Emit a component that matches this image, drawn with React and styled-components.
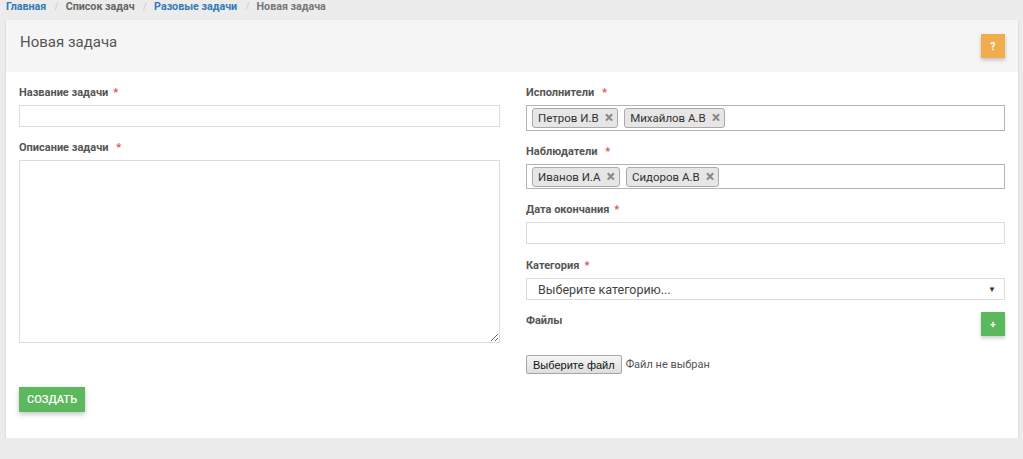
import React from "react";
import styled, { createGlobalStyle } from "styled-components";

const GlobalStyle = createGlobalStyle`
  body {
    margin: 0;
    background: #ececec;
    font-family: Roboto, "Liberation Sans", Arial, sans-serif;
    color: #555;
  }
`;

const Page = styled.div`
  padding: 0 5px 0 6px;
`;

const Breadcrumb = styled.ol`
  list-style: none;
  margin: 0;
  padding: 0;
  height: 20px;
  display: flex;
  align-items: center;
  font-size: 10.7px;
  font-weight: 700;
  line-height: 14px;
  position: relative;
  top: -3px;

  & > li + li::before {
    content: "/";
    color: #ccc;
    font-weight: 400;
    padding: 0 7px 0 8px;
  }
`;

const Crumb = styled.li`
  color: ${(p) => (p.$link ? "#337ab7" : p.$active ? "#777" : "#666")};
`;

const Card = styled.div`
  background: #fff;
  box-shadow: 0 1px 2px rgba(0, 0, 0, 0.18);
`;

const CardHeader = styled.div`
  background: #f5f5f5;
  height: 52px;
  display: flex;
  align-items: flex-start;
  justify-content: space-between;
  padding: 0 13px 0 14px;
`;

const Title = styled.h3`
  margin: 12px 0 0;
  font-size: 15px;
  font-weight: 400;
  color: #555;
  line-height: 20px;
`;

const SquareButton = styled.button`
  width: 24px;
  height: 24px;
  border: none;
  padding: 0;
  background: ${(p) => p.$color};
  color: #fff;
  font-size: 10px;
  font-weight: 700;
  font-family: inherit;
  box-shadow: 0 2px 4px rgba(0, 0, 0, 0.22);
  cursor: pointer;
  margin-top: ${(p) => p.$top || 0}px;
`;

const CardBody = styled.div`
  padding: 14px 13px 26px;
`;

const Row = styled.div`
  display: grid;
  grid-template-columns: 481px 1fr;
  gap: 26px;
`;

const Column = styled.div`
  display: flex;
  flex-direction: column;
`;

const Label = styled.label`
  display: block;
  font-size: 11px;
  font-weight: 700;
  line-height: 14px;
  color: #555;
  margin: ${(p) => p.$mt ?? 14}px 0 5px;
`;

const Req = styled.span`
  color: #d9534f;
  margin-left: 5px;
`;

const TextInput = styled.input`
  box-sizing: border-box;
  width: 100%;
  height: 22px;
  border: 1px solid #dcdcdc;
  padding: 0 12px;
  font-family: inherit;
  font-size: 12px;
  outline: none;
`;

const TextArea = styled.textarea`
  box-sizing: border-box;
  width: 100%;
  height: 183px;
  border: 1px solid #dcdcdc;
  padding: 6px 12px;
  font-family: inherit;
  font-size: 12px;
  outline: none;
  display: block;
`;

const TagBox = styled.div`
  box-sizing: border-box;
  height: ${(p) => p.$h}px;
  border: 1px solid #b4b4b4;
  display: flex;
  align-items: center;
  gap: 6px;
  padding: 0 5px;
`;

const Tag = styled.span`
  box-sizing: border-box;
  height: 20px;
  display: inline-flex;
  align-items: center;
  gap: 6px;
  padding: 0 4px 0 5px;
  background: #e6e6e6;
  border: 1px solid #aaa;
  border-radius: 3px;
  font-size: 11.5px;
  color: #333;
`;

const TagX = styled.span`
  color: #888;
  font-weight: 700;
  font-size: 16px;
  line-height: 1;
`;

const Select = styled.div`
  box-sizing: border-box;
  height: 22px;
  border: 1px solid #dcdcdc;
  display: flex;
  align-items: center;
  justify-content: space-between;
  padding: 0 8px 0 11px;
  font-size: 12.5px;
  color: #444;
`;

const Caret = styled.span`
  font-size: 8px;
  color: #333;
`;

const FilesHead = styled.div`
  display: flex;
  justify-content: space-between;
  align-items: flex-start;
  margin-top: 12px;
`;

const FilesLabel = styled(Label)`
  margin: 2px 0 0;
`;

const FileRow = styled.div`
  display: flex;
  align-items: center;
  gap: 4px;
  margin-top: 19px;
`;

const FileButton = styled.button`
  height: 19px;
  padding: 0 6px;
  font-family: "Liberation Sans", Arial, sans-serif;
  font-size: 11px;
  color: #111;
  background: linear-gradient(#f6f6f6, #dedede);
  border: 1px solid #a6a6a6;
  border-radius: 2px;
`;

const FileText = styled.span`
  font-size: 11px;
  color: #555;
`;

const CreateButton = styled.button`
  margin-top: 13px;
  height: 25px;
  padding: 0 8px;
  border: none;
  background: #5cb85c;
  color: #fff;
  font-family: inherit;
  font-size: 11px;
  font-weight: 500;
  box-shadow: 0 2px 5px rgba(0, 0, 0, 0.25);
  cursor: pointer;
`;

const people = [
  { label: "Исполнители", h: 26, mt: 0, tags: ["Петров И.В", "Михайлов А.В"] },
  { label: "Наблюдатели", h: 25, mt: 14, tags: ["Иванов И.А", "Сидоров А.В"] },
];

export default function App() {
  return (
    <>
      <GlobalStyle />
      <Page>
        <Breadcrumb>
          <Crumb $link>Главная</Crumb>
          <Crumb>Список задач</Crumb>
          <Crumb $link>Разовые задачи</Crumb>
          <Crumb $active>Новая задача</Crumb>
        </Breadcrumb>
        <Card>
          <CardHeader>
            <Title>Новая задача</Title>
            <SquareButton $color="#f0ad4e" $top={14}>?</SquareButton>
          </CardHeader>
          <CardBody>
            <Row>
              <Column>
                <Label $mt={0}>
                  Название задачи<Req>*</Req>
                </Label>
                <TextInput />
                <Label>
                  Описание задачи <Req>*</Req>
                </Label>
                <TextArea />
              </Column>
              <Column>
                {people.map((g) => (
                  <React.Fragment key={g.label}>
                    <Label $mt={g.mt}>
                      {g.label} <Req>*</Req>
                    </Label>
                    <TagBox $h={g.h}>
                      {g.tags.map((t) => (
                        <Tag key={t}>
                          {t}
                          <TagX>×</TagX>
                        </Tag>
                      ))}
                    </TagBox>
                  </React.Fragment>
                ))}
                <Label $mt={14}>
                  Дата окончания<Req>*</Req>
                </Label>
                <TextInput />
                <Label $mt={15}>
                  Категория<Req>*</Req>
                </Label>
                <Select>
                  Выберите категорию...
                  <Caret>▼</Caret>
                </Select>
                <FilesHead>
                  <FilesLabel>Файлы</FilesLabel>
                  <SquareButton $color="#5cb85c">+</SquareButton>
                </FilesHead>
                <FileRow>
                  <FileButton>Выберите файл</FileButton>
                  <FileText>Файл не выбран</FileText>
                </FileRow>
              </Column>
            </Row>
            <CreateButton>СОЗДАТЬ</CreateButton>
          </CardBody>
        </Card>
      </Page>
    </>
  );
}
